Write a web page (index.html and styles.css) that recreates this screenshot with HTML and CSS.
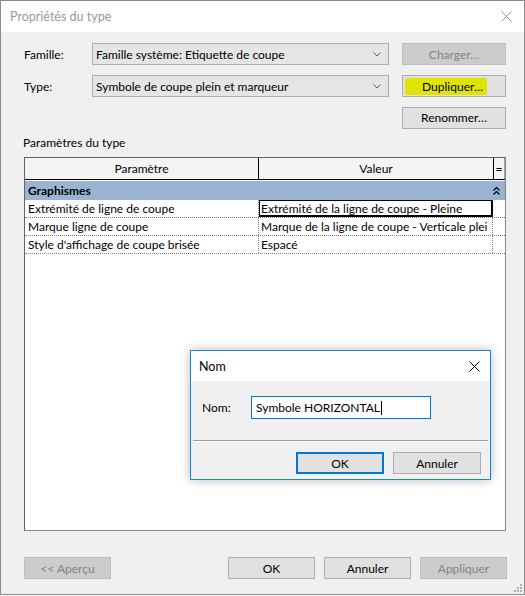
FILE: index.html
```html
<!DOCTYPE html>
<html lang="fr">
<head>
<meta charset="utf-8">
<title>Propriétés du type</title>
<link rel="stylesheet" href="styles.css">
</head>
<body>
<div class="window">
  <div class="titlebar">
    <span class="title">Propriétés du type</span>
    <svg class="close" width="11" height="11" viewBox="0 0 11 11"><path d="M0.5 0.5 L10.5 10.5 M10.5 0.5 L0.5 10.5" stroke="#9a9a9a" stroke-width="1" fill="none"/></svg>
  </div>
  <div class="body">
    <div class="top">
      <span class="lbl">Famille:</span>
      <div class="combo"><span>Famille système: Etiquette de coupe</span><svg width="8" height="5" viewBox="0 0 8 5"><path d="M0.5 0.5 L4 4 L7.5 0.5" stroke="#606060" fill="none"/></svg></div>
      <button class="btn disabled">Charger…</button>
      <span class="lbl">Type:</span>
      <div class="combo"><span>Symbole de coupe plein et marqueur</span><svg width="8" height="5" viewBox="0 0 8 5"><path d="M0.5 0.5 L4 4 L7.5 0.5" stroke="#606060" fill="none"/></svg></div>
      <button class="btn"><span class="hl">Dupliquer…</span></button>
      <span></span><span></span>
      <button class="btn">Renommer…</button>
    </div>
    <div class="section">Paramètres du type</div>
    <div class="grid">
      <div class="ghead">
        <div class="hc">Paramètre</div>
        <div class="hc">Valeur</div>
        <div class="hc eq">=</div>
      </div>
      <div class="group"><span>Graphismes</span><svg width="7" height="8" viewBox="0 0 7 8"><path d="M0.5 3.5 L3.5 0.5 L6.5 3.5 M0.5 7.5 L3.5 4.5 L6.5 7.5" stroke="#000" stroke-width="1.2" fill="none"/></svg></div>
      <div class="row">
        <div class="c1">Extrémité de ligne de coupe</div>
        <div class="c2 sel">Extrémité de la ligne de coupe - Pleine</div>
        <div class="c3"></div>
      </div>
      <div class="row">
        <div class="c1">Marque ligne de coupe</div>
        <div class="c2">Marque de la ligne de coupe - Verticale plei</div>
        <div class="c3"></div>
      </div>
      <div class="row">
        <div class="c1">Style d'affichage de coupe brisée</div>
        <div class="c2">Espacé</div>
        <div class="c3"></div>
      </div>
    </div>
    <div class="bottom">
      <button class="btn disabled">&lt;&lt; Aperçu</button>
      <div class="right">
        <button class="btn">OK</button>
        <button class="btn">Annuler</button>
        <button class="btn disabled">Appliquer</button>
      </div>
    </div>
    <div class="grip">
      <i></i><i></i><i></i><i></i><i></i><i></i>
    </div>
  </div>

  <div class="dialog">
    <div class="dtitle">
      <span>Nom</span>
      <svg width="11" height="11" viewBox="0 0 11 11"><path d="M0.5 0.5 L10.5 10.5 M10.5 0.5 L0.5 10.5" stroke="#000" stroke-width="1" fill="none"/></svg>
    </div>
    <div class="dbody">
      <div class="dfield">
        <span class="dlbl">Nom:</span>
        <div class="input">Symbole HORIZONTAL<span class="caret"></span></div>
      </div>
      <div class="dsep"></div>
      <div class="dbtns">
        <button class="btn default">OK</button>
        <button class="btn">Annuler</button>
      </div>
    </div>
  </div>
</div>
</body>
</html>
```
FILE: styles.css
```css
* { box-sizing: border-box; }
html, body { margin: 0; padding: 0; background: #fff; }
body {
  font-family: Lato, "Noto Sans", sans-serif;
  font-size: 12px;
  color: #000;
}
.window {
  position: relative;
  width: 525px;
  height: 595px;
  border: 1px solid #8c8c8c;
  display: flex;
  flex-direction: column;
}
.titlebar {
  height: 31px;
  background: #fff;
  display: flex;
  align-items: center;
  justify-content: space-between;
  padding: 0 12px 0 9px;
  flex: none;
}
.title { color: #999; font-size: 12.5px; }
.body {
  flex: 1;
  background: #f0f0f0;
  padding: 11px 17px 0 22px;
  display: flex;
  flex-direction: column;
  position: relative;
}
.top {
  display: grid;
  grid-template-columns: 69px 297px 117px;
  grid-template-rows: 22px 22px 22px;
  row-gap: 10px;
  align-items: center;
}
.top .btn:last-child { margin-top: -1px; }
.lbl { padding-left: 1px; }
.combo {
  height: 22px;
  border: 1px solid #adadad;
  background: #e5e5e5;
  display: flex;
  align-items: center;
  justify-content: space-between;
  padding: 0 7px 0 3px;
}
.btn {
  font-family: inherit;
  font-size: 12px;
  height: 22px;
  width: 104px;
  border: 1px solid #adadad;
  background: #e1e1e1;
  color: #000;
  padding: 0;
  display: flex;
  align-items: center;
  justify-content: center;
  justify-self: end;
}
.btn.disabled { background: #cccccc; border-color: #bfbfbf; color: #838383; }
.hl {
  background: #e0e400;
  padding: 1px 4px 1px 17px;
  border-radius: 2px;
  margin-right: 16px;
}
.section { margin-top: 6px; height: 15px; line-height: 15px; }
.grid {
  margin-top: 7px;
  margin-left: 1px;
  width: 482px;
  height: 374px;
  background: #fff;
  border: 1px solid #828790;
  border-top-color: #646464;
  border-left-color: #646464;
}
.ghead {
  display: grid;
  grid-template-columns: 234px 235px 1fr;
  height: 22px;
  background: #f4f4f4;
  border-bottom: 1px solid #000;
}
.hc {
  border-right: 1px solid #000;
  display: flex;
  align-items: center;
  justify-content: center;
}
.hc.eq { border-right: 1px solid #a0a0a0; }
.group {
  margin-top: 1px;
  height: 19px;
  background: #99b4d1;
  font-weight: bold;
  display: flex;
  align-items: center;
  justify-content: space-between;
  padding: 0 5px 0 3px;
}
.row {
  display: grid;
  grid-template-columns: 234px 234px 10px;
  height: 18px;
  border-bottom: 1px dotted #808080;
}
.row > div { display: flex; align-items: center; white-space: nowrap; overflow: hidden; }
.c1 { padding-left: 3px; border-right: 1px dotted #808080; }
.c2 { padding-left: 2px; border-right: 1px dotted #808080; }
.c2.sel { border: 1px solid #000; border-right-width: 2px; border-bottom-width: 2px; padding-left: 1px; }
.bottom {
  margin-top: 26px;
  display: flex;
  justify-content: space-between;
  width: 484px;
  padding-left: 1px;
}
.bottom .btn { width: 87px; }
.right { display: flex; gap: 9px; }
.grip {
  position: absolute;
  right: 2px;
  bottom: 2px;
  width: 9px;
  height: 9px;
}
.grip i {
  position: absolute;
  width: 2px;
  height: 2px;
  background: #b0b0b0;
}
.grip i:nth-child(1) { right: 0; bottom: 0; }
.grip i:nth-child(2) { right: 3px; bottom: 0; }
.grip i:nth-child(3) { right: 6px; bottom: 0; }
.grip i:nth-child(4) { right: 0; bottom: 3px; }
.grip i:nth-child(5) { right: 3px; bottom: 3px; }
.grip i:nth-child(6) { right: 0; bottom: 6px; }

.dialog {
  position: absolute;
  left: 189px;
  top: 349px;
  width: 301px;
  height: 130px;
  border: 1px solid #1a84d8;
  box-shadow: 0 0 10px rgba(0,0,0,0.28);
  display: flex;
  flex-direction: column;
}
.dtitle {
  height: 30px;
  background: #fff;
  display: flex;
  align-items: center;
  justify-content: space-between;
  padding: 0 10px 0 8px;
  font-size: 12.5px;
}
.dbody {
  flex: 1;
  background: #f0f0f0;
  padding: 15px 2px 0 2px;
  display: flex;
  flex-direction: column;
}
.dfield { display: flex; align-items: center; padding-left: 9px; }
.dlbl { width: 49px; }
.input {
  width: 180px;
  height: 23px;
  background: #fff;
  border: 1px solid #0078d7;
  display: flex;
  align-items: center;
  padding-left: 4px;
}
.caret { display: inline-block; width: 1px; height: 14px; background: #000; margin-left: 1px; }
.dsep {
  margin-top: 21px;
  height: 2px;
  border-top: 1px solid #a0a0a0;
  border-bottom: 1px solid #fff;
}
.dbtns {
  margin-top: 10px;
  display: flex;
  justify-content: flex-end;
  gap: 9px;
  padding-right: 7px;
}
.dbtns .btn { width: 88px; height: 22px; }
.btn.default { border: 2px solid #0078d7; }
```
